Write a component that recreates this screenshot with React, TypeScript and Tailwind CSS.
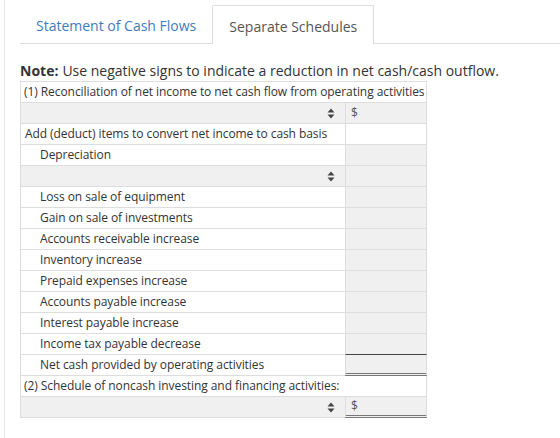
import React from 'react'

type Row =
  | { kind: 'title'; text: string }
  | { kind: 'select'; dollar?: boolean; valueBorder?: string }
  | { kind: 'label'; text: string; indent?: boolean; valueGray?: boolean; valueBorder?: string }

const rows: Row[] = [
  { kind: 'title', text: '(1) Reconciliation of net income to net cash flow from operating activities' },
  { kind: 'select', dollar: true },
  { kind: 'label', text: 'Add (deduct) items to convert net income to cash basis' },
  { kind: 'label', text: 'Depreciation', indent: true, valueGray: true },
  { kind: 'select' },
  { kind: 'label', text: 'Loss on sale of equipment', indent: true, valueGray: true },
  { kind: 'label', text: 'Gain on sale of investments', indent: true, valueGray: true },
  { kind: 'label', text: 'Accounts receivable increase', indent: true, valueGray: true },
  { kind: 'label', text: 'Inventory increase', indent: true, valueGray: true },
  { kind: 'label', text: 'Prepaid expenses increase', indent: true, valueGray: true },
  { kind: 'label', text: 'Accounts payable increase', indent: true, valueGray: true },
  { kind: 'label', text: 'Interest payable increase', indent: true, valueGray: true },
  { kind: 'label', text: 'Income tax payable decrease', indent: true, valueGray: true, valueBorder: 'single' },
  { kind: 'label', text: 'Net cash provided by operating activities', indent: true, valueGray: true, valueBorder: 'double' },
  { kind: 'title', text: '(2) Schedule of noncash investing and financing activities:' },
  { kind: 'select', dollar: true, valueBorder: 'double' },
]

function Arrows() {
  return (
    <svg width="8" height="11" viewBox="0 0 8 11" className="text-[#444]">
      <path d="M4 0.5 L7.5 4.5 L0.5 4.5 Z" fill="currentColor" />
      <path d="M4 10.5 L7.5 6.5 L0.5 6.5 Z" fill="currentColor" />
    </svg>
  )
}

function ValueCell({ gray, dollar, border }: { gray?: boolean; dollar?: boolean; border?: string }) {
  const b =
    border === 'single'
      ? 'border-b border-b-[#444]'
      : border === 'double'
        ? 'border-b-[3px] border-double border-b-[#777]'
        : 'border-b border-b-[#ddd]'
  return (
    <div className={`w-[82px] h-full flex items-center pl-[5px] border-l border-r border-[#ddd] ${b} ${gray ? 'bg-[#f0f0f0]' : 'bg-white'}`}>
      {dollar && <span className="text-[12px] text-[#555]">$</span>}
    </div>
  )
}

export default function App() {
  return (
    <div className="min-h-screen bg-white" style={{ fontFamily: '"Open Sans", "Liberation Sans", sans-serif' }}>
      <div className="ml-[4px] min-h-[438px] border-l border-[#e8e8e8] pl-[15px] pt-[5px]">
        <div className="flex border-b border-[#ddd]">
          <div className="h-[38px] pt-[2px] px-4 flex items-center text-[14px] text-[#3d7dbf]">Statement of Cash Flows</div>
          <div className="h-[39px] -mb-px pt-[2px] px-4 flex items-center text-[14px] text-[#555] bg-white border border-b-0 border-[#ddd] rounded-t-[2px]">
            Separate Schedules
          </div>
        </div>

        <div className="mt-[17px] h-[20px] flex items-center text-[14px] text-[#333] leading-[20px]">
          <span className="font-bold">Note:</span>
          <span className="ml-[4px]">Use negative signs to indicate a reduction in net cash/cash outflow.</span>
        </div>

        <div className="w-[407px] border-t border-[#ddd] text-[12px] tracking-[-0.07px] text-[#333]">
          {rows.map((r, i) => {
            if (r.kind === 'title') {
              return (
                <div key={i} className="h-[21px] flex items-center pl-[3px] border-l border-r border-b border-[#ddd] bg-white whitespace-nowrap">
                  {r.text}
                </div>
              )
            }
            if (r.kind === 'select') {
              return (
                <div key={i} className="h-[21px] flex">
                  <div className="w-[325px] h-full flex items-center justify-end pr-[10px] bg-[#f0f0f0] border-l border-b border-[#ddd]">
                    <Arrows />
                  </div>
                  <ValueCell gray dollar={r.dollar} border={r.valueBorder} />
                </div>
              )
            }
            return (
              <div key={i} className="h-[21px] flex">
                <div className={`w-[325px] h-full flex items-center border-l border-b border-[#ddd] bg-white whitespace-nowrap ${r.indent ? 'pl-[19px]' : 'pl-[4px]'}`}>
                  {r.text}
                </div>
                <ValueCell gray={r.valueGray} border={r.valueBorder} />
              </div>
            )
          })}
        </div>
      </div>
    </div>
  )
}
